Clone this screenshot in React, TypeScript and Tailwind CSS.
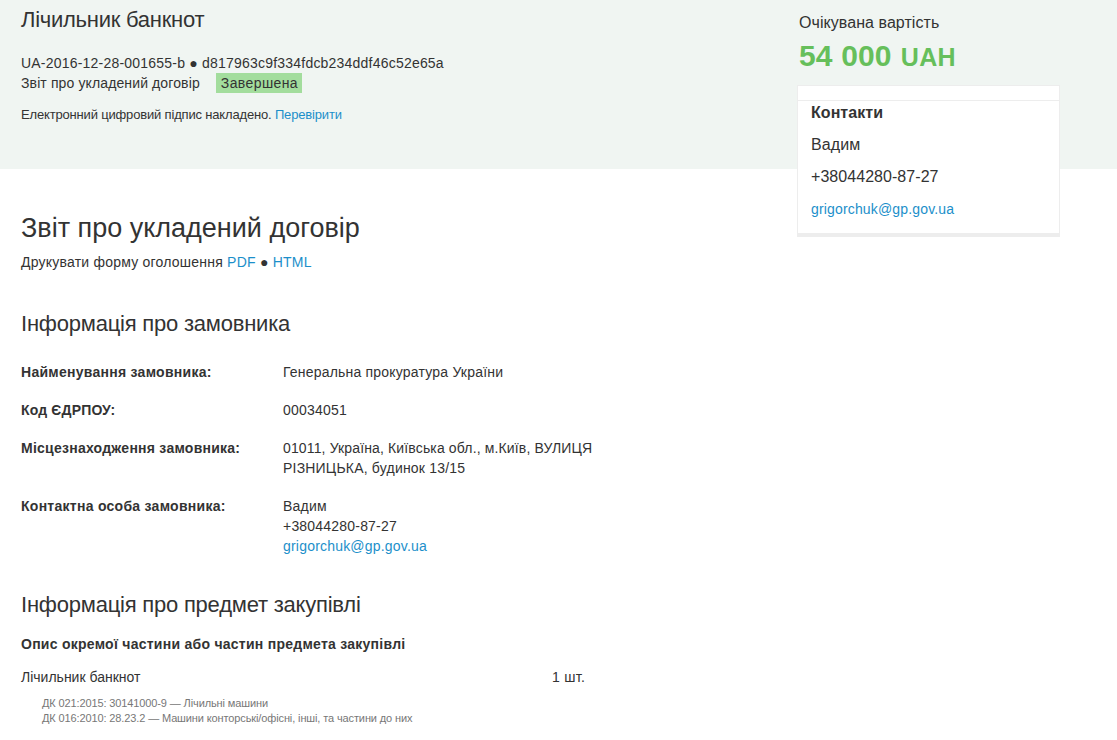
import React from "react";

const link = "text-[#1c8fca]";

function Row({ label, className, children }: { label: string; className: string; children: React.ReactNode }) {
  return (
    <div className="flex">
      <dt className={`w-[262px] shrink-0 font-bold ${className}`}>{label}</dt>
      <dd className="w-[330px] tracking-[0.2px]">{children}</dd>
    </div>
  );
}

export default function App() {
  return (
    <div className="flex h-[740px] w-[1117px] flex-col overflow-hidden bg-white font-['Liberation_Sans',Arial,sans-serif] text-[14px] leading-[20px] text-[#333]">
      <header className="flex h-[169px] shrink-0 bg-[#f0f5f2] pl-[21px]">
        <div className="w-[776px] shrink-0">
          <h1 className="pt-[8px] text-[22px] leading-[24px] tracking-[-0.26px]">Лічильник банкнот</h1>
          <p className="mt-[21px] tracking-[0.21px]">UA-2016-12-28-001655-b ● d817963c9f334fdcb234ddf46c52e65a</p>
          <p className="flex items-center gap-4">
            <span className="tracking-[0.12px]">Звіт про укладений договір</span>
            <span className="bg-[#a3dd9d] pr-1 pl-[5px] tracking-[0.4px]">Завершена</span>
          </p>
          <p className="mt-[12px] text-[13px] tracking-[-0.17px]">
            Електронний цифровий підпис накладено. <a className={link}>Перевірити</a>
          </p>
        </div>
        <aside className="w-[263px]">
          <p className="pt-[13px] pl-[2px] text-[16px] tracking-[0.06px]">Очікувана вартість</p>
          <p className="mt-[5px] flex items-baseline gap-[9px] pl-[2px] text-[30px] leading-[36px] font-bold text-[#66bf5b]">
            <span className="tracking-[0.15px]">54 000</span>
            <span className="text-[25px] tracking-[0.4px]">UAH</span>
          </p>
          <section className="mt-[10px] h-[152px] border border-b-4 border-[#ededed] bg-white text-[16px]">
            <div className="h-[15px] border-b border-[#ededed]" />
            <div className="pl-[13px]">
              <h2 className="pt-[2px] font-bold tracking-[0.05px]">Контакти</h2>
              <p className="mt-[12px] tracking-[0.1px]">Вадим</p>
              <p className="mt-[12px] tracking-[0.05px]">+38044280-87-27</p>
              <a className={`mt-[12px] block text-[14px] tracking-[0.16px] ${link}`}>grigorchuk@gp.gov.ua</a>
            </div>
          </section>
        </aside>
      </header>
      <main className="pl-[21px]">
        <h2 className="mt-[43px] text-[27px] leading-[32px]">Звіт про укладений договір</h2>
        <p className="mt-[8px] tracking-[0.22px]">
          Друкувати форму оголошення <a className={link}>PDF</a> ● <a className={link}>HTML</a>
        </p>
        <h3 className="mt-[38px] text-[22px] leading-[28px] tracking-[-0.22px]">Інформація про замовника</h3>
        <dl className="mt-[24px] flex flex-col gap-[18px]">
          <Row label="Найменування замовника:" className="tracking-[0.27px]">Генеральна прокуратура України</Row>
          <Row label="Код ЄДРПОУ:" className="tracking-[0.17px]">00034051</Row>
          <Row label="Місцезнаходження замовника:" className="tracking-[0.25px]">
            <span className="tracking-[0.14px]">01011, Україна, Київська обл., м.Київ, ВУЛИЦЯ</span>
            <br />
            РІЗНИЦЬКА, будинок 13/15
          </Row>
          <Row label="Контактна особа замовника:" className="tracking-[0.27px]">
            Вадим
            <br />
            +38044280-87-27
            <br />
            <a className={link}>grigorchuk@gp.gov.ua</a>
          </Row>
        </dl>
        <h3 className="mt-[35px] text-[22px] leading-[28px] tracking-[-0.22px]">Інформація про предмет закупівлі</h3>
        <h4 className="mt-[15px] font-bold tracking-[0.26px]">Опис окремої частини або частин предмета закупівлі</h4>
        <div className="mt-[13px] flex">
          <span className="w-[531px]">Лічильник банкнот</span>
          <span className="tracking-[0.3px]">1 шт.</span>
        </div>
        <div className="mt-[9px] pl-[21px] text-[11px] leading-[15px] tracking-[-0.12px] text-[#777]">
          <p>ДК 021:2015: 30141000-9 — Лічильні машини</p>
          <p>ДК 016:2010: 28.23.2 — Машини конторські/офісні, інші, та частини до них</p>
        </div>
      </main>
    </div>
  );
}
